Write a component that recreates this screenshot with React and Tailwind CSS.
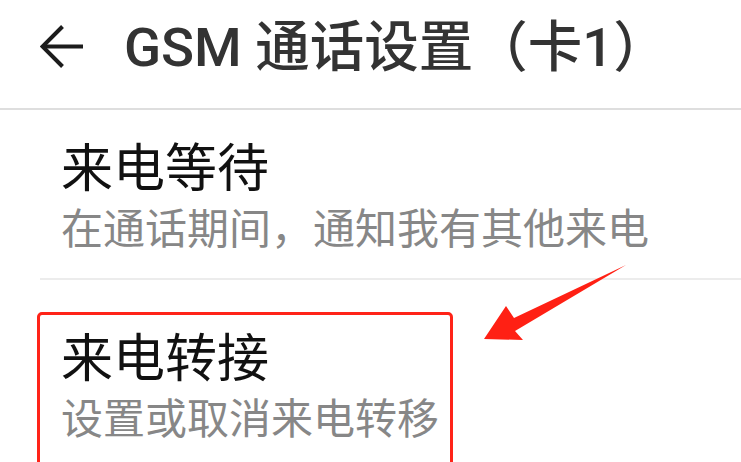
import React from 'react';

// 通话设置页面 (GSM 卡1)
const cjk = { fontFamily: '"Noto Sans CJK SC", "Noto Sans", sans-serif' };

const BackArrow = () => (
  <svg width="44" height="44" viewBox="0 0 44 44" fill="none">
    <path d="M43 21.5H3" stroke="#1c1c1c" strokeWidth="4" />
    <path d="M22.5 1.5L2.5 21.5L22.5 41.5" stroke="#1c1c1c" strokeWidth="4" />
  </svg>
);

const SettingItem = ({ title, desc, className }) => (
  <div className={`pl-[21px] ${className}`}>
    <div className="text-[52px] leading-[60px] text-[#111111]" style={cjk}>{title}</div>
    <div className="text-[42px] leading-[50px] text-[#878787] mt-[6px]" style={cjk}>{desc}</div>
  </div>
);

export default function App() {
  return (
    <div className="relative w-[741px] h-[462px] bg-white overflow-hidden">
      {/* 상단 헤더 */}
      <header className="h-[94px] flex items-center pl-[40px]">
        <BackArrow />
        <h1
          className="ml-[40px] text-[54.5px] leading-[60px] font-medium text-[#333333] whitespace-nowrap"
          style={{ fontFamily: 'Roboto, "Noto Sans CJK SC", sans-serif' }}
        >
          GSM 通话设置（卡1）
        </h1>
      </header>
      <div className="mt-[14px] h-[2px] bg-[#dedede]" />

      <div className="pl-[40px]">
        <SettingItem title="来电等待" desc="在通话期间，通知我有其他来电" className="pt-[25px] pb-[27px]" />
        <div className="h-[2px] bg-[#ececec]" />
        <SettingItem title="来电转接" desc="设置或取消来电转移" className="pt-[45px]" />
      </div>

      {/* 빨간 표시 (주석) */}
      <div className="absolute left-[37px] top-[312px] w-[416px] h-[200px] border-[3px] border-[#ff2318] rounded-[5px]" />
      <svg className="absolute left-0 top-0" width="741" height="462" viewBox="0 0 741 462">
        <polygon
          points="626,265 514,318 506,306 484,339 523,340 515,331"
          fill="#ff2014"
        />
      </svg>
    </div>
  );
}
